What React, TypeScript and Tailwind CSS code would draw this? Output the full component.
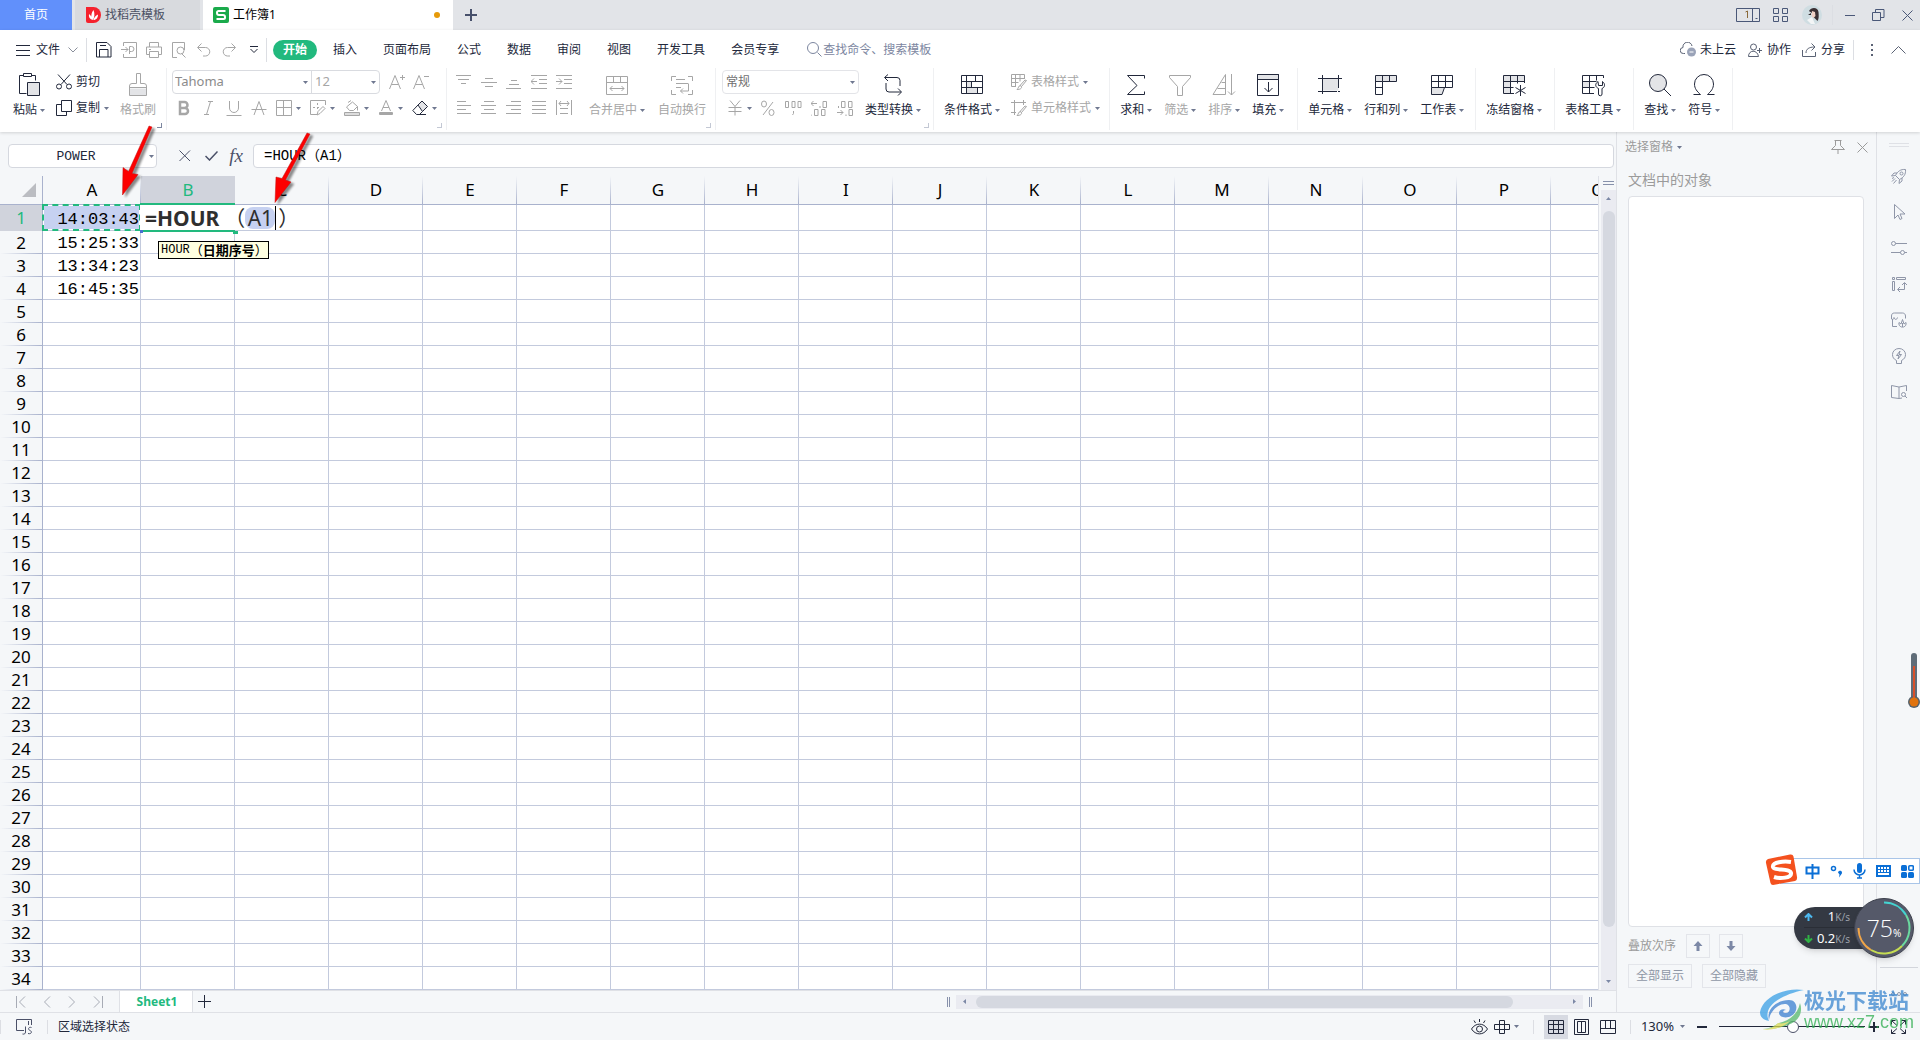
import type { ReactNode } from 'react'

type IconProps = { d?: string; w?: number; h?: number; className?: string; children?: ReactNode }

const Icon = ({ d, w = 16, h = 16, className = '', children }: IconProps) => (
  <svg width={w} height={h} viewBox={`0 0 ${w} ${h}`} fill="none" stroke="currentColor" className={`shrink-0 ${className}`} aria-hidden="true">
    {children}
    {d && <path d={d} />}
  </svg>
)

const Big = ({ d, children }: { d?: string; children?: ReactNode }) => <Icon w={24} h={24} d={d}>{children}</Icon>

const Caret = () => (
  <svg width="5" height="3" viewBox="0 0 5 3" className="shrink-0 text-[#6f7890]" aria-hidden="true">
    <path d="M0 0h5L2.500 3z" fill="currentColor" />
  </svg>
)

const Divider = ({ className = 'h-6' }: { className?: string }) => <span className={`w-px shrink-0 bg-[#dcdee3] ${className}`} />

const OFF = 'text-[#a6a6a6]'
const SHADE = '#e3e4e7'

/* ---------- title bar ---------- */

const TitleBar = () => (
  <header className="flex h-[30px] shrink-0 items-stretch bg-[#e2e4e8] text-xs">
    <button className="w-[72px] bg-[#6190fb] text-white">首页</button>
    <button className="ml-[3px] flex w-[125px] items-center gap-1 bg-[#d8dade] pl-[11px] text-[#4b5063]">
      <svg width="15" height="16" viewBox="0 0 15 16" aria-hidden="true">
        <path d="M0 0h7.500a7.500 8 0 0 1 0 16H2a2 2 0 0 1-2-2z" fill="#f5222d" />
        <path d="M7 13C4.500 11 5 6 7.500 3c1.500 4 1 7-.5 10zM6.500 13C3.500 12 2.500 10 3 7c2 1.500 3 3 3.500 6zM7.500 13c3 0 4.500-2.500 4.500-5.500-2.500 1-4 3-4.500 5.500z" fill="#fff" />
      </svg>
      找稻壳模板
    </button>
    <button className="ml-[3px] flex w-[250px] items-center gap-1 bg-white pl-[10px] text-black">
      <svg width="16" height="16" viewBox="0 0 16 16" aria-hidden="true">
        <rect width="16" height="16" rx="2" fill="#1aaa4b" />
        <path d="M12.500 4h-7a1.500 1.500 0 0 0-1.500 1.500V6a2 2 0 0 0 2 2h4a2 2 0 0 1 2 2v.5a1.500 1.500 0 0 1-1.500 1.500h-7" fill="none" stroke="#fff" strokeWidth="2" />
      </svg>
      工作簿1
      <span className="ml-auto mr-[13px] size-[6px] rounded-full bg-[#e69a0a]" />
    </button>
    <button aria-label="新建" className="flex w-9 items-center justify-center text-[#47506b]">
      <Icon w={12} h={12}><path d="M6 0v12M0 6h12" strokeWidth="2" /></Icon>
    </button>
    <div className="ml-auto flex items-center pr-[7px] text-[#4a5878]">
      <button aria-label="窗口" className="mr-3">
        <Icon w={25} h={14} d="M.5 .5h23v13h-23zM16.500 .5v13M19.500 10.500h2"><path d="M9.500 4l2-1v7" stroke="#8a6a3a" /></Icon>
      </button>
      <button aria-label="应用" className="mr-[14px]">
        <Icon w={15} h={15} d="M.5 .5h5v5h-5zM9.500 .5h5v5h-5zM.5 8.500h5v5h-5zM9.500 8.500h5v5h-5z" />
      </button>
      <button aria-label="账户">
        <svg width="20" height="20" viewBox="0 0 20 20" aria-hidden="true">
          <circle cx="10" cy="10" r="10" fill="#cfdde2" />
          <path d="M7 6c2-4 9-4 9.500 1 .3 4 .5 7-1 9l-4-4c1-3-2-4-4.500-6z" fill="#3a2f33" />
          <path d="M10 6l3 1 .5 4-2 2-2-2z" fill="#f0cfc4" />
          <path d="M5 15l5-3 3 7H9z" fill="#f3f5f6" />
          <path d="M6 10l3-2v2z" fill="#2a2226" />
        </svg>
      </button>
      <Divider className="ml-[10px] mr-3 h-5 bg-[#c9ccd2]" />
      <button aria-label="最小化" className="mr-[17px]"><Icon w={10} h={12} d="M0 6.500h10" /></button>
      <button aria-label="还原" className="mr-[17px]"><Icon w={13} h={12} d="M.5 3.500h8v8h-8zM3.500 3.500v-3h8.500v8h-3.500" /></button>
      <button aria-label="关闭"><Icon w={11} h={11} d="M.5 .5l10 10M10.500 .5l-10 10" /></button>
    </div>
  </header>
)

/* ---------- menu row ---------- */

const menus = ['插入', '页面布局', '公式', '数据', '审阅', '视图', '开发工具', '会员专享']

const quick = [
  { name: '输出为PDF', d: 'M2.500 4V.5h13v15h-13V12M0 7.500h7M4.500 5l2.500 2.500L4.500 10M8.500 12V4.500h2a2.500 2.500 0 0 1 0 5h-2' },
  { name: '打印', d: 'M3.500 5V.5h9V5M3.500 12.500h-3V5h15v7.500h-3M3.500 9.500h9v6h-9zM3 7.500h2' },
  { name: '打印预览', d: 'M6 15.500H1.500v-15h12V8M10.500 11.500l4 4M13 8.500a3.500 3.500 0 1 1-7 0 3.500 3.500 0 0 1 7 0z' },
  { name: '撤销', d: 'M5.500 1.500l-4 4 4 4M2 5.500h7.500a4 4 0 0 1 0 8.500H7' },
  { name: '恢复', d: 'M10.500 1.500l4 4-4 4M14 5.500H6.500a4 4 0 0 0 0 8.500H9' },
]

const MenuRow = () => (
  <nav className="flex h-[38px] items-center pl-4 pt-px text-xs text-[#22283b]">
    <button className="flex items-center">
      <Icon w={14} h={12} d="M0 1.500h14M0 6.500h14M0 11.500h14" />
      <span className="ml-[6px]">文件</span>
      <Icon w={10} h={6} d="M.5 .5L5 5 9.500 .5" className="ml-2 text-[#8a8f9b]" />
    </button>
    <Divider className="ml-2 mr-[9px] h-6" />
    <div className="flex items-center gap-[9px]">
      <button aria-label="保存"><Icon d="M.5 .5h10.500l4 4v10.500h-14.500zM3.500 15V7.500h8.500V15M4 3.500h6" /></button>
      {quick.map(q => <button key={q.name} aria-label={q.name} className={OFF}><Icon d={q.d} /></button>)}
      <button aria-label="自定义" className="ml-1"><Icon w={9} h={7} d="M0 .5h8M.5 3l3.500 3.500L7.500 3" /></button>
    </div>
    <Divider className="ml-[7px] mr-[6px] h-6" />
    <button className="h-5 w-11 rounded-full bg-[#22b97e] font-bold text-white">开始</button>
    <div className="ml-4 flex gap-[26px]">
      {menus.map(m => <button key={m}>{m}</button>)}
    </div>
    <label className="ml-7 flex items-center gap-px text-[#7c869f]">
      <Icon w={15} h={15} d="M10.500 10.500l4 4M11.500 6a5.500 5.500 0 1 1-11 0 5.500 5.500 0 0 1 11 0z" />
      <input placeholder="查找命令、搜索模板" className="w-32 outline-none placeholder:text-[#7c869f]" />
    </label>
    <div className="ml-auto flex items-center pr-[14px]">
      <button className="flex items-center gap-1">
        <Icon w={16} h={15} className="text-[#5a6274]">
          <path d="M5 11.500H3.500a3 3 0 0 1-.5-6 4.500 4.500 0 0 1 9-1.500" />
          <circle cx="11.500" cy="10" r="4.500" fill="#9aa3b8" stroke="none" />
          <path d="M9.500 10h4" stroke="#fff" />
        </Icon>
        未上云
      </button>
      <button className="ml-3 flex items-center gap-[5px]">
        <Icon w={14} h={14} className="text-[#5a6274]" d="M8.500 4a3 3 0 1 1-6 0 3 3 0 0 1 6 0zM.5 13.500c0-7 9-7 10 0zM9 7.500h5M11.500 5v5" />
        协作
      </button>
      <button className="ml-[11px] flex items-center gap-[5px]">
        <Icon w={14} h={14} className="text-[#5a6274]" d="M.5 7v6.500h13V9M4 10c0-4 3-6 8.500-6M9.500 .5L13 4 9.500 7.500" />
        分享
      </button>
      <Divider className="ml-2 mr-[17px] h-5" />
      <button aria-label="更多"><svg width="2" height="12" aria-hidden="true"><path d="M0 0h2v2H0zM0 5h2v2H0zM0 10h2v2H0z" fill="#5a6274" /></svg></button>
      <button aria-label="收起" className="ml-[18px]"><Icon w={15} h={8} d="M.5 7.500l7-7 7 7" className="text-[#5a6274]" /></button>
    </div>
  </nav>
)

/* ---------- ribbon ---------- */

const Group = ({ children, className = '', mark = '' }: { children: ReactNode; className?: string; mark?: string }) => (
  <div className={`relative flex h-[62px] shrink-0 items-start border-r border-[#eff0f2] ${className}`}>
    {children}
    {mark && <span className={`absolute bottom-[2px] right-1 size-[5px] border-b border-r ${mark}`} />}
  </div>
)

const BigButton = ({ label, icon, off = false, caret = true }: { label: string; icon: ReactNode; off?: boolean; caret?: boolean }) => (
  <button className={`flex shrink-0 flex-col items-center pt-[5px] ${off ? 'text-[#a6a6a6]' : 'text-[#22283b]'}`}>
    {icon}
    <span className="mt-1 flex items-center gap-[3px] whitespace-nowrap leading-[18px]">{label}{caret && <Caret />}</span>
  </button>
)

const Rows = ({ top, bottom, className = '' }: { top: ReactNode; bottom: ReactNode; className?: string }) => (
  <div className={`flex shrink-0 flex-col gap-1 pt-[2px] ${className}`}>
    <div className="flex h-6 items-center">{top}</div>
    <div className="flex h-5 items-center">{bottom}</div>
  </div>
)

const alignTop = [
  { name: '顶端对齐', d: 'M0 1.500h15M2 5.500h11M5 9.500h5' },
  { name: '垂直居中', d: 'M4 4.500h8M0 8.500h16M4 12.500h8' },
  { name: '底端对齐', d: 'M5 6.500h6M3 10.500h10M0 14.500h15' },
  { name: '减少缩进', d: 'M0 1.500h16M8 5.500h8M8 9.500h8M0 14.500h16M0 7.500h6M3 4.500l-3 3 3 3' },
  { name: '增加缩进', d: 'M0 1.500h16M8 5.500h8M8 9.500h8M0 14.500h16M0 7.500h6M3 4.500l3 3-3 3' },
]

const alignBottom = [
  { name: '左对齐', d: 'M1 1.500h9M1 5.500h14M1 9.500h9M1 13.500h14' },
  { name: '居中', d: 'M3 1.500h10M0 5.500h15M3 9.500h10M0 13.500h15' },
  { name: '右对齐', d: 'M5 1.500h10M0 5.500h15M5 9.500h10M0 13.500h15' },
  { name: '两端对齐', d: 'M1 1.500h14M1 5.500h14M1 9.500h14M1 13.500h14' },
  { name: '分散对齐', d: 'M.5 0v15M15.500 0v15M3 3.500h10M5 1L3 3.500 5 6M11 1l2 2.500L11 6M4 8.500h8M4 13.500h8' },
]

const GRID = 'M1.500 2.500h21v18h-21z'

const Ribbon = () => (
  <div className="flex h-16 text-xs">
    <Group className="gap-[11px] pl-[13px] pr-[10px]" mark="border-[#7c869f]">
      <BigButton label="粘贴" icon={<Big d="M9.500 20.500H2.500v-18h4M14.500 2.500h4v5M6.500 .5h8v3h-8z"><path d="M10.500 9.500h12v13h-12z" fill={SHADE} /></Big>} />
      <Rows
        className="text-[#22283b]"
        top={<button className="flex items-center gap-1"><Icon d="M2 .5l9 10M14 .5l-9 10M5.500 12.500a2.500 2.500 0 1 1-5 0 2.500 2.500 0 0 1 5 0zM15.500 12.500a2.500 2.500 0 1 1-5 0 2.500 2.500 0 0 1 5 0z" />剪切</button>}
        bottom={<button className="flex items-center gap-1"><Icon d="M5.500 .5h10v11h-10zM5.500 4.500h-5v11h10v-4" />复制<Caret /></button>}
      />
      <BigButton off caret={false} label="格式刷" icon={<Big><path d="M3.500 15.500h17v7.500h-17z" fill={SHADE} stroke="none" /><path d="M10.500 .5h4v10h3.500a2.500 2.500 0 0 1 2.500 2.500v9.500h-17V13A2.500 2.500 0 0 1 6 10.500h4.500zM3.500 14.500h17" /></Big>} />
    </Group>

    <Group className="pl-[5px] pr-[9px]" mark="border-[#c3c8d4]">
      <Rows
        top={
          <>
            <div className="flex h-6 w-[208px] items-center rounded-sm border border-[#d9dbe0] pr-[3px]">
              <select aria-label="字体" className="ml-[2px] flex-1 appearance-none text-[13px] text-[#8b8b8b] outline-none"><option>Tahoma</option></select>
              <Caret />
              <span className="ml-[3px] h-full w-px bg-[#d9dbe0]" />
              <select aria-label="字号" className="ml-[3px] w-[56px] appearance-none text-[13px] text-[#a6a6a6] outline-none"><option>12</option></select>
              <Caret />
            </div>
            <button aria-label="增大字号" className={`ml-[9px] ${OFF}`}><Icon d="M.5 15L6 1.500 11.500 15M2.500 10.500h7M11 3.500h5M13.500 1v5" /></button>
            <button aria-label="减小字号" className={`ml-2 ${OFF}`}><Icon d="M.5 15L6 1.500 11.500 15M2.500 10.500h7M11 2.500h5" /></button>
          </>
        }
        bottom={
          <div className={`ml-1 flex items-center gap-[9px] ${OFF}`}>
            <button aria-label="加粗"><Icon><path d="M4 2h4.500a3 3 0 0 1 0 6H4zM4 8h5a3 3 0 0 1 0 6H4z" strokeWidth="2.500" /></Icon></button>
            <button aria-label="倾斜"><Icon d="M7 1.500h5M3 14.500h5M9.500 1.500l-4 13" /></button>
            <button aria-label="下划线"><Icon d="M3.500 1v7a4.500 4.500 0 0 0 9 0V1M.5 15.500h15" /></button>
            <button aria-label="删除线"><Icon d="M3 15L8 1.500 13 15M.5 9.500h15" /></button>
            <button aria-label="边框" className="flex items-center gap-1"><Icon d="M.5 .5h15v15H.5zM7.500 .5v15M.5 7.500h15" /><Caret /></button>
            <button aria-label="绘制边框" className="flex items-center gap-1"><Icon d="M7 14.500H.5V.5h15V5M3 7.500h2M7 7.500h2M7.500 3v2M7.500 7v2M7 15l1-3.500 5-5 2 2-5 5z" /><Caret /></button>
            <button aria-label="填充颜色" className="flex items-center gap-1"><Icon><path d="M.5 12.500h15v3H.5z" fill="#dcdcdc" /><path d="M2.500 7l6-5 5 4.500-4 4h-4zM4 2.500l3-2M13.500 6.500v4" /></Icon><Caret /></button>
            <button aria-label="字体颜色" className="flex items-center gap-1"><Icon><path d="M3.500 11L8 .5l4.500 10.500M5 7.500h6" /><rect x="1" y="12" width="14" height="3" rx="1" fill="currentColor" stroke="none" /></Icon><Caret /></button>
            <button aria-label="清除" className="flex items-center gap-1 text-[#22283b]"><Icon><path d="M6 5l4-4 5.500 5.500-5 5z" fill={SHADE} /><path d="M10.500 11.500L7.500 14.500h-3L.8 10.500 6 5M5 14.500h9" /></Icon><Caret /></button>
          </div>
        }
      />
    </Group>

    <Group className="pl-[9px] pr-[9px]" mark="border-[#c3c8d4]">
      <Rows
        className="mr-[17px]"
        top={<div className={`flex gap-[9px] ${OFF}`}>{alignTop.map(a => <button key={a.name} aria-label={a.name}><Icon d={a.d} /></button>)}</div>}
        bottom={<div className={`flex gap-[9px] ${OFF}`}>{alignBottom.map(a => <button key={a.name} aria-label={a.name}><Icon d={a.d} /></button>)}</div>}
      />
      <BigButton off label="合并居中" icon={<Big d="M1.500 3.500h21v18h-21zM1.500 9.500h21M8.500 3.500v6M15.500 3.500v6M5 15.500h14M7.500 13L5 15.500 7.500 18M16.500 13l2.500 2.500-2.500 2.500" />} />
      <span className="w-[13px]" />
      <BigButton off caret={false} label="自动换行" icon={<Big d="M1.500 8V3.500H6M18 3.500h4.500V8M1.500 17v4.500H6M18 21.500h4.500V17M6 6.500h9M6 10.500h12M6 14.500h5M18.500 10.500v7.500h-8M13 15.500L10.500 18l2.500 2.500" />} />
    </Group>

    <Group className="gap-[6px] pl-[6px] pr-3" mark="border-[#c3c8d4]">
      <Rows
        className="w-[137px]"
        top={
          <div className="flex h-6 flex-1 items-center rounded-sm border border-[#e3e4e8] pr-[3px]">
            <select aria-label="数字格式" className="ml-[3px] flex-1 appearance-none text-[#6f6f6f] outline-none"><option>常规</option></select>
            <Caret />
          </div>
        }
        bottom={
          <div className={`ml-[6px] flex flex-1 items-center justify-between pr-[5px] ${OFF}`}>
            <button aria-label="货币" className="flex items-center gap-[5px]"><Icon w={14} d="M2 .5l5 6 5-6M7 6.500v9M.5 7.500h13M.5 11.500h13" /><Caret /></button>
            <button aria-label="百分比"><Icon w={14} d="M12 2L2 15M5.500 4a2.500 3 0 1 1-5 0 2.500 3 0 0 1 5 0zM13 12.500a2.500 3 0 1 1-5 0 2.500 3 0 0 1 5 0z" /></button>
            <button aria-label="千位分隔"><Icon w={17} d="M.5 1.500h3v6h-3zM7 1.500h3v6H7zM13 1.500h3v6h-3zM8.500 11v2.500L7.500 15" /></button>
            <button aria-label="增加小数位"><Icon w={17} d="M0 3.500h6M2.500 1L0 3.500 2.500 6M9 6v2M12 1.500h3.500v6H12zM0 14.500v1.500M3.500 9.500h3.500v6H3.500zM10.500 9.500H14v6h-3.500z" /></button>
            <button aria-label="减少小数位"><Icon w={17} d="M1.500 6v2M4.500 1.500H8v6H4.500zM11.500 1.500H15v6h-3.500zM0 12.500h6M3.500 10L6 12.500 3.500 15M9 14.500V16M12 9.500h3.500v6H12z" /></button>
          </div>
        }
      />
      <BigButton label="类型转换" icon={<Big d="M7 1.500L3.500 4.500 7 8M4 4.500h12a3 3 0 0 1 3 3V13M5 10v6a3 3 0 0 0 3 3h12M17 15.500l3.500 3.500-3.500 3.500" />} />
    </Group>

    <Group className="gap-[11px] pl-[10px] pr-[9px]">
      <BigButton label="条件格式" icon={<Big><path d="M7 8.500h4v6H7zM7 14.500h10v6H7z" fill={SHADE} stroke="none" /><path d={`${GRID}M1.500 8.500h21M1.500 14.500h21M6.500 2.500v18M15.500 2.500v6M11.500 8.500v6M17.500 14.500v6`} /></Big>} />
      <Rows
        className={OFF}
        top={<button className="flex items-center gap-1"><Icon d="M5 12.500H.5V.5h13V5M.5 4.500h13M.5 8.500h7M4.500 .5v12M9 .5v7M15.500 6.500l-5 6-1.500-1 5-5.500zM9.500 11.500c-2 0-2 3-3.500 4 3 0 5-1 4.500-3" />表格样式<Caret /></button>}
        bottom={<button className="flex items-center gap-1"><Icon d="M0 2.500h15M3.500 0v15M0 12.500h5M12.500 0v5M15.500 6.500l-5 6-1.500-1 5-5.500zM9.500 11.500c-2 0-2 3-3.500 4 3 0 5-1 4.500-3" />单元格样式<Caret /></button>}
      />
    </Group>

    <Group className="gap-3 pl-[10px] pr-[13px]">
      <BigButton label="求和" icon={<Big d="M20.500 5.500v-3h-17l9.500 10-9.500 9h17v-3" />} />
      <BigButton off label="筛选" icon={<Big d="M1.500 2.500h21v2l-8 9v9h-5v-9l-8-9z" />} />
      <BigButton off label="排序" icon={<Big d="M1 21.500h12.500v-20zM5.500 15.500h8M9.500 9.500h4M19.500 1v21M16 18.500l3.500 3.500 3.500-3.500" />} />
      <BigButton label="填充" icon={<Big><path d="M1.500 1.500h21v5h-21z" fill={SHADE} /><path d="M1.500 1.500h21v21h-21zM12.500 9v10M8.500 15l4 4 4-4" /></Big>} />
    </Group>

    <Group className="gap-3 pl-[10px] pr-[11px]">
      <BigButton label="单元格" icon={<Big><path d="M4.500 5.500h16v12h-16z" fill={SHADE} stroke="none" /><path d="M0 5.500h24M4.500 2v19M20.500 2v13M0 18.500h19M20 18.500h2" /></Big>} />
      <BigButton label="行和列" icon={<Big><path d="M1.500 2.500h21v6h-21z" fill={SHADE} stroke="none" /><path d="M1.500 2.500h21v6h-14v13h-7zM1.500 8.500h7M1.500 14.500h7M8.500 2.500v6M15.500 2.500v6" /></Big>} />
      <BigButton label="工作表" icon={<Big><path d="M1.500 14.500h13l-2 7h-11z" fill={SHADE} stroke="none" /><path d="M1.500 2.500h21v12h-21zM1.500 8.500h21M8.500 2.500v12M15.500 2.500v12M1.500 14.500v7h10.500l2.500-7" /></Big>} />
    </Group>

    <Group className="pl-[10px] pr-3">
      <BigButton label="冻结窗格" icon={<Big><path d="M1.500 2.500h21v6h-14v12h-7z" fill={SHADE} stroke="none" /><path d="M12 20.500H1.500v-18h21V10M1.500 8.500h21M1.500 14.500h10M8.500 2.500v18M15.500 2.500v8M18.500 12v11M13.500 14.500l10 6M23.500 14.500l-10 6" /></Big>} />
    </Group>
    <Group className="pl-[10px] pr-3">
      <BigButton label="表格工具" icon={<Big><path d="M1.500 8.500h7v6h-7z" fill={SHADE} stroke="none" /><path d="M13 20.500H1.500v-18h21V5M1.500 8.500h14M1.500 14.500h12M8.500 2.500v18M15.500 2.500v5M17 8.500c-4 3-2 6 .5 7v5.500a1.500 1.500 0 0 0 3.500 0v-5.500c2.500-1 4-4 .5-7v4h-4z" /></Big>} />
    </Group>
    <Group className="gap-3 pl-[10px] pr-3">
      <BigButton label="查找" icon={<Big><circle cx="10" cy="10" r="8.500" fill={SHADE} /><path d="M16 16l7 7" /></Big>} />
      <BigButton label="符号" icon={<Big d="M1.500 21.500h7c-3.500-3-6-6-6-10.500a9.500 9.500 0 0 1 19 0c0 4.500-2.500 7.500-6 10.500h7" />} />
    </Group>
  </div>
)

/* ---------- formula bar ---------- */

const FormulaBar = () => (
  <div className="flex h-6 shrink-0 items-center pl-2 pr-[2px] text-[#4a5068]">
    <div className="flex h-6 w-[149px] items-center rounded-sm border border-[#d5d8df] bg-white pr-[2px]">
      <input aria-label="名称框" defaultValue="POWER" className="min-w-0 flex-1 pr-[6px] pt-[2px] text-center font-['Liberation_Mono',monospace] text-[13px] text-[#22283b] outline-none" />
      <Caret />
    </div>
    <button aria-label="取消" className="ml-[22px]"><Icon w={12} h={12} d="M.5 .5l10.500 10.500M11 .5L.5 11" /></button>
    <button aria-label="确认" className="ml-[14px]"><Icon w={13} h={10}><path d="M.5 5l4 4L12.500 .5" strokeWidth="1.500" /></Icon></button>
    <button aria-label="插入函数" className="ml-[9px] w-[18px] font-['Liberation_Serif',serif] text-[19px] italic leading-5">fx</button>
    <input
      aria-label="编辑栏"
      defaultValue="=HOUR（A1）"
      className="ml-2 h-6 min-w-0 flex-1 rounded-sm border border-[#d5d8df] bg-white pb-1 pl-[10px] font-['Liberation_Mono','Noto_Sans_CJK_SC',monospace] text-sm leading-5 text-black outline-none"
    />
  </div>
)

/* ---------- sheet ---------- */

const columns = 'ABCDEFGHIJKLMNOPQ'.split('')
const times = ['14:03:43', '15:25:33', '13:34:23', '16:45:35']
const rows = Array.from({ length: 34 }, (_, i) => i + 1)

const Editing = () => (
  <div className="absolute -left-px -top-[2px] z-10 h-[29px] w-[95px] border-y-2 border-[#22b97e] bg-white">
    <div className="flex h-[25px] w-40 items-center whitespace-nowrap bg-white pl-[5px] text-[21px] leading-6 text-[#2f2f2f]">
      <b>=HOUR</b>
      <span className="flex w-[26px] shrink-0 justify-end">（</span>
      <span className="flex h-[22px] w-[30px] shrink-0 items-center justify-center rounded-lg bg-[#c6d1f1]">A1</span>
      <span className="h-6 w-px shrink-0 bg-black" />
      <span className="pl-[2px]">）</span>
    </div>
    <span className="absolute -bottom-[3px] left-0 h-[3px] w-[3px] bg-[#4a6fd0]" />
    <span className="absolute -bottom-[4px] -right-[3px] h-[3px] w-[5px] bg-[#22b97e]" />
    <div className="absolute left-[18px] top-9 flex h-[18px] items-center whitespace-nowrap border border-black bg-[#ffffe1] pl-[2px] text-[13px] leading-4 text-black">
      <span className="font-['Liberation_Mono',monospace] text-xs">HOUR</span>（<b>日期序号</b>）
    </div>
  </div>
)

const Sheet = () => (
  <div className="min-w-0 flex-1 overflow-hidden border-r border-[#dfe1e8]">
    <table className="w-[1645px] table-fixed border-separate border-spacing-0 text-[17px] text-black">
      <colgroup>
        <col className="w-[43px]" />
        <col className="w-[98px]" />
        {columns.slice(1).map(c => <col key={c} className="w-[94px]" />)}
      </colgroup>
      <thead>
        <tr className="h-[29px]">
          <th className="border-b border-r border-[#a9b2cd] p-0">
            <svg width="14" height="14" className="ml-[22px]" aria-hidden="true"><path d="M14 0v14H0z" fill="#bbbdc2" /></svg>
          </th>
          {columns.map(c => (
            <th
              key={c}
              className={`border-b border-[#a9b2cd] p-0 font-normal leading-6 ${c === 'B' ? 'bg-[#d0d3dc] text-[#22b97e]' : 'bg-[linear-gradient(to_bottom,transparent,#a9b2cd)] bg-[length:1px_100%] bg-right bg-no-repeat'}`}
            >
              {c}
            </th>
          ))}
        </tr>
      </thead>
      <tbody>
        {rows.map(r => (
          <tr key={r} className={r === 1 ? 'h-[26px]' : 'h-[23px]'}>
            <th
              scope="row"
              className={`border-r border-[#a9b2cd] p-0 font-normal leading-[22px] ${r === 1 ? 'bg-[#d0d3dc] text-[#22b97e]' : 'bg-[linear-gradient(to_right,transparent,#a9b2cd)] bg-[length:100%_1px] bg-bottom bg-no-repeat'}`}
            >
              {r}
            </th>
            {columns.map(c => (
              <td key={c} className="relative border-b border-r border-[#c3cadd] bg-white p-0 pt-1 text-right font-['Liberation_Mono',monospace] text-[17px] leading-[18px]">
                {c === 'A' && r === 1 && (
                  <div className="absolute -inset-px flex items-center justify-end border-2 border-dashed border-[#22b97e] bg-[#c6d1f1] bg-clip-padding pt-1">
                    {times[0]}
                  </div>
                )}
                {c === 'A' && r > 1 && times[r - 1] && <span className="mr-px">{times[r - 1]}</span>}
                {c === 'B' && r === 1 && <div className="text-left font-['Noto_Sans','Noto_Sans_CJK_SC',sans-serif]"><Editing /></div>}
              </td>
            ))}
          </tr>
        ))}
      </tbody>
    </table>
  </div>
)

const VScroll = () => (
  <div className="ml-[2px] flex w-[15px] shrink-0 flex-col">
    <div className="mx-[2px] mt-[5px] h-1 border-y border-[#8791ab]" />
    <div className="mt-[5px] flex min-h-0 flex-1 flex-col items-center bg-[#eaebf1] pb-[7px] pt-[7px]">
      <Icon w={5} h={3}><path d="M0 3h5L2.500 0z" fill="#7c88a6" stroke="none" /></Icon>
      <span className="mt-[11px] w-3 flex-1 rounded-full bg-[#d5d8e0]" />
      <Icon w={5} h={3} className="mt-[53px]"><path d="M0 0h5L2.500 3z" fill="#7c88a6" stroke="none" /></Icon>
    </div>
  </div>
)

const SheetTabs = () => (
  <div className="flex h-[23px] shrink-0 items-center border-y border-[#dfe1e6] text-[#a7abb5]">
    <div className="flex w-[119px] gap-[17px] pl-4">
      <button aria-label="第一张"><Icon w={10} h={12} d="M.5 0v12M9 .5L3.500 6 9 11.500" /></button>
      <button aria-label="上一张"><Icon w={8} h={12} d="M7 .5L1.500 6 7 11.500" /></button>
      <button aria-label="下一张"><Icon w={8} h={12} d="M1 .5L6.500 6 1 11.500" /></button>
      <button aria-label="最后一张"><Icon w={10} h={12} d="M9.500 0v12M1 .5L6.500 6 1 11.500" /></button>
    </div>
    <button className="h-[21px] w-[74px] border-x border-[#dfe1e6] bg-white pl-[2px] text-[12px] font-bold leading-5 text-[#22b97e]">Sheet1</button>
    <button aria-label="新建工作表" className="ml-[5px] text-[#22283b]"><Icon w={13} h={13} d="M6.500 0v13M0 6.500h13" /></button>
    <div className="ml-auto flex w-[42%] items-center pl-[10px] pr-6">
      <span className="h-[10px] w-[3px] border-x border-[#8791ab]" />
      <div className="ml-[6px] flex h-[14px] flex-1 items-center bg-[#eaebf1] px-[7px]">
        <Icon w={3} h={5}><path d="M3 0v5L0 2.500z" fill="#7c88a6" stroke="none" /></Icon>
        <span className="ml-[10px] mr-[60px] h-3 flex-1 rounded-full bg-[#d5d8e0]" />
        <Icon w={3} h={5}><path d="M0 0v5l3-2.500z" fill="#7c88a6" stroke="none" /></Icon>
      </div>
      <span className="ml-[6px] h-[10px] w-[3px] border-x border-[#8791ab]" />
    </div>
  </div>
)

/* ---------- selection pane and side tools ---------- */

const Pane = () => (
  <aside className="flex w-[261px] shrink-0 flex-col border-x border-b border-[#dfe1e6] pb-6 pl-[11px] pr-3 text-xs text-[#9b9b9b]">
    <div className="-ml-[3px] -mr-1 flex h-[30px] items-center">
      <button className="flex items-center gap-1">选择窗格<Caret /></button>
      <button aria-label="固定" className="ml-auto"><Icon w={14} h={14} d="M3.500 .5h7M4.500 .5v5l-4 4h13l-4-4v-5M7 9.500V14" /></button>
      <button aria-label="关闭窗格" className="ml-[12px]"><Icon w={11} h={11} d="M.5 .5l10 10M10.500 .5l-10 10" /></button>
    </div>
    <h2 className="pb-[5px] pt-[7px] text-sm leading-[22px]">文档中的对象</h2>
    <div className="flex-1 rounded-sm border border-[#dfe1e6] bg-white" />
    <div className="mt-[7px] flex items-center">
      叠放次序
      <button aria-label="上移" className="ml-[10px] flex size-6 items-center justify-center border border-[#e3e5ea]"><Icon w={10} h={10}><path d="M5 0l4.500 5H6.500v5h-3V5H.5z" fill="#7c88a6" stroke="none" /></Icon></button>
      <button aria-label="下移" className="ml-[9px] flex size-6 items-center justify-center border border-[#e3e5ea]"><Icon w={10} h={10}><path d="M5 10l4.500-5H6.500V0h-3v5H.5z" fill="#7c88a6" stroke="none" /></Icon></button>
    </div>
    <div className="mt-[6px] flex gap-[10px] text-[#8f96a5]">
      <button className="h-6 w-16 border border-[#e3e5ea]">全部显示</button>
      <button className="h-6 w-16 border border-[#e3e5ea]">全部隐藏</button>
    </div>
  </aside>
)

const tools = [
  { name: '助手', d: 'M14.500 1.500c-5-.5-8 2-10 6l4 4c4-2 6.500-5 6-10zM12 5.500a1.500 1.500 0 1 1-3 0 1.500 1.500 0 0 1 3 0zM6 5H3L.5 8l4-.5M11 10v3l-3 2.500.5-4M4 10.500L1 13.500M5.500 12L2.500 15.500M3 9.500l-2 1' },
  { name: '选择', d: 'M3.500 .5v14l3.500-3.500 2 4.500 2-1-2-4.500h5z' },
  { name: '设置', d: 'M4.500 3.500a2 2 0 1 1-4 0 2 2 0 0 1 4 0zM4.500 3.500H16M13.500 12.500a2 2 0 1 1-4 0 2 2 0 0 1 4 0zM0 12.500h9.500M13.500 12.500H16' },
  { name: '结构', d: 'M1.500 1.500h2v2h-2zM5.500 1.500h9v2h-9zM1.500 5.500h2v9h-2zM13.500 7v6.500H7M11 9l2.500-2.500L16 9M9 11l-2.500 2.500L9 16' },
  { name: '稻壳', d: 'M6 14.500H1.500V7M.5 7V4c0-2 1-3 3-3h8c1.500 0 3 1 3 3v2.500M.5 7c1.500 1 2.500 0 2.500-1.500C3.500 8 6 8 6.500 5.500M10.500 15c-2-.5-3-2.500-2.500-4.500l2 1.500 1.500-4.500L13 12l2-1.500c.5 2-.5 4-2.500 4.500zM11.500 11v4' },
  { name: '灵感', d: 'M5.500 15.500v-3C2.500 11 1.500 9 1.500 6.500a6.500 6 0 0 1 13 0c0 2.500-1 4.500-4 6v3zM9 3L5.500 7.500H8L7 11l3.500-4.500H8z' },
  { name: '查阅', d: 'M8 3v11M8 3L.5 1.500v12L8 14.500M8 3l7.500-1.500V7M8 14.500l3-.5M14.500 10.500a2 2 0 1 1-4 0 2 2 0 0 1 4 0zM14 12l2 2' },
]

const SideTools = () => (
  <aside className="flex w-[43px] shrink-0 flex-col items-center border-b border-[#dfe1e6] pt-[11px] text-[#8f96a8]">
    <span className="h-1 w-5 border-y border-[#dfe1e6]" />
    <div className="mt-[21px] flex flex-col gap-5">
      {tools.map(t => <button key={t.name} aria-label={t.name}><Icon d={t.d} /></button>)}
    </div>
    <span className="mb-6 mt-auto h-px w-[38px] bg-[#d3d6dc]" />
    <button aria-label="更多工具" className="mb-4"><Icon w={16} h={4} d="M3.500 2a1.500 1.500 0 1 1-3 0 1.500 1.500 0 0 1 3 0zM9.500 2a1.500 1.500 0 1 1-3 0 1.500 1.500 0 0 1 3 0zM15.500 2a1.500 1.500 0 1 1-3 0 1.500 1.500 0 0 1 3 0z" /></button>
  </aside>
)

/* ---------- status bar ---------- */

const StatusBar = () => (
  <footer className="flex h-[27px] shrink-0 items-center text-xs text-[#22283b]">
    <Divider className="h-[14px]" />
    <Icon w={17} h={16} className="ml-[15px] text-[#4a5068]" d="M8 11.500H.5V.5h12M12.500 2v4M15.500 .5v5.500M12 .5h3.500M9.500 7.500V13c0 1.500-1 2.500-3 2M15.500 8.500c-3-1-4 2-1.500 3s1.500 4-2 3" />
    <Divider className="ml-[14px] h-[14px]" />
    <span className="ml-[10px]">区域选择状态</span>
    <div className="ml-auto flex items-center pr-[14px]">
      <button aria-label="护眼模式"><Icon w={17} h={16} d="M.5 10c4-6.500 12-6.500 16 0-4 6.500-12 6.500-16 0zM11.500 10a3 3 0 1 1-6 0 3 3 0 0 1 6 0zM8.500 0v3M3 1.500l1.500 2.500M14 1.500L12.500 4" /></button>
      <button aria-label="阅读模式" className="ml-[6px] flex items-center gap-1"><Icon w={16} h={14} d="M5.500 .5h5v13h-5zM.5 4.500h15v5H.5z" /><Caret /></button>
      <Divider className="ml-[14px] mr-[10px] h-[14px]" />
      <button aria-label="普通视图" className="flex size-6 items-center justify-center bg-[#d7dae2]"><Icon w={16} h={14} d="M.5 .5h15v13H.5zM.5 4.500h15M.5 9.500h15M5.500 .5v13M10.500 .5v13" /></button>
      <button aria-label="分页预览" className="ml-[6px]"><Icon w={15} h={16} d="M.5 .5h14v15H.5zM3.500 2.500h8v11h-8zM7.500 2.500v11" /></button>
      <button aria-label="页面布局" className="ml-[11px]"><Icon w={16} h={14} d="M.5 .5h15v13H.5zM5.500 .5v8M10.500 .5v8M.5 8.500h15" /></button>
      <Divider className="ml-[14px] mr-[10px] h-[14px]" />
      <button className="flex items-center gap-[6px] text-[13px]">130%<Caret /></button>
      <button aria-label="缩小" className="ml-3"><Icon w={10} h={4}><path d="M0 2h10" strokeWidth="2" /></Icon></button>
      <input
        type="range"
        aria-label="缩放"
        defaultValue="51"
        className="ml-3 h-px w-[146px] appearance-none bg-[#22283b] [&::-webkit-slider-thumb]:size-3 [&::-webkit-slider-thumb]:appearance-none [&::-webkit-slider-thumb]:rounded-full [&::-webkit-slider-thumb]:border [&::-webkit-slider-thumb]:border-[#4a5068] [&::-webkit-slider-thumb]:bg-white"
      />
      <button aria-label="放大" className="ml-1"><Icon w={10} h={10}><path d="M5 0v10M0 5h10" strokeWidth="2" /></Icon></button>
      <button aria-label="全屏" className="ml-3"><Icon w={15} h={14} d="M.5 4.500v-4h4M10.500 .5h4v4M14.500 9.500v4h-4M4.500 13.500h-4v-4M.5 .5L6 5.500M14.500 .5L9 5.500M14.500 13.500L9 8.500M.5 13.500L6 8.500" /></button>
    </div>
  </footer>
)

/* ---------- things floating over the window ---------- */

const RedArrows = () => (
  <svg width="240" height="90" viewBox="0 0 240 90" className="pointer-events-none absolute left-[110px] top-[120px] z-20 drop-shadow-[3px_2px_1px_rgba(0,0,0,0.45)]" aria-hidden="true">
    <path d="M39 6l3 1-20 46.500 6 1L12.500 75 13 47.500l5.500 4z" fill="#fd0000" stroke="#c01010" strokeWidth="0.500" />
    <path d="M197 13l3 1-24.500 46 5.500 2-16 20.500L166 57l6 1.500z" fill="#fd0000" stroke="#c01010" strokeWidth="0.500" />
  </svg>
)

const ImeBar = () => (
  <div className="absolute bottom-[156px] right-0 z-20 flex h-[26px] w-[140px] items-center justify-end gap-[10px] border border-[#a9c5e8] bg-white pr-[5px] text-[#0a6fd6]">
    <svg width="34" height="32" viewBox="0 0 34 32" className="absolute -left-4 -top-[5px]" aria-hidden="true">
      <path d="M3 5L25 .5q3-.5 3.500 2L32 23q.5 3-2 4L8 31q-2 0-2.500-2L1 9q-.5-3 2-4z" fill="#f4511e" />
      <path d="M26 8c-7-1-19 0-18 5 1 4 17 1 18 6s-11 6-17 4" fill="none" stroke="#fff" strokeWidth="4" />
    </svg>
    <button aria-label="中文"><Icon w={15} h={15}><path d="M1.500 3.500h12v6h-12zM7.500 0v15" strokeWidth="2" /></Icon></button>
    <button aria-label="标点"><Icon w={13} h={13}><circle cx="3.500" cy="3.500" r="2" strokeWidth="1.500" /><path d="M8 7.500a2 2 0 1 1 3.500 1.500L9 12.500l.5-3z" fill="currentColor" stroke="none" /></Icon></button>
    <button aria-label="语音"><Icon w={13} h={16}><rect x="4" width="5" height="10" rx="2.500" fill="currentColor" stroke="none" /><path d="M1 6.500a5.500 5.500 0 0 0 11 0M6.500 12v3M4 15h5" strokeWidth="1.500" /></Icon></button>
    <button aria-label="键盘"><Icon w={15} h={12}><path d="M1 1h13v10H1z" strokeWidth="2" /><path d="M1 4.500h13M1 7.500h13M4.500 2v6M7.500 2v6M10.500 2v6" /></Icon></button>
    <button aria-label="工具箱"><Icon w={13} h={13}><rect width="6" height="6" rx="1.500" fill="currentColor" stroke="none" /><rect x="7.800" y=".8" width="4.500" height="4.500" rx="1" strokeWidth="1.600" /><rect y="7" width="6" height="6" rx="1.500" fill="currentColor" stroke="none" /><rect x="7" y="7" width="6" height="6" rx="1.500" fill="currentColor" stroke="none" /></Icon></button>
  </div>
)

const SpeedBall = () => (
  <div className="absolute bottom-[82px] right-[6px] z-20 flex h-[60px] items-center text-white">
    <div className="-mr-[30px] flex h-[42px] w-[90px] flex-col justify-center rounded-l-full bg-[#343943] pl-[10px] text-xs shadow-md">
      <div className="flex h-[21px] items-center border-b border-[#2a2e36]">
        <Icon w={9} h={8} className="text-[#4cb8ef]"><path d="M4.500 8V1.500M1 4.500l3.500-3.500L8 4.500" strokeWidth="2" /></Icon>
        <span className="flex-1 pr-[34px] text-right text-[13px]">1<small className="text-[10px] text-[#9da1aa]">K/s</small></span>
      </div>
      <div className="flex h-[21px] items-center">
        <Icon w={9} h={8} className="text-[#2fb344]"><path d="M4.500 0v6.500M1 3.500L4.500 7 8 3.500" strokeWidth="2" /></Icon>
        <span className="flex-1 pr-[34px] text-right text-[13px]">0.2<small className="text-[10px] text-[#9da1aa]">K/s</small></span>
      </div>
    </div>
    <div className="relative flex size-[60px] items-center justify-center rounded-full border border-[#3d414d] bg-[#555969] shadow-md">
      <svg width="60" height="60" viewBox="0 0 60 60" fill="none" strokeWidth="2" className="absolute -left-px -top-px" aria-hidden="true">
        <path d="M30 4.500A25.500 25.500 0 0 1 52 17" stroke="#44d3d0" />
        <path d="M52 17A25.500 25.500 0 0 1 48 48" stroke="#6bd9a0" />
        <path d="M48 48A25.500 25.500 0 0 1 17 52" stroke="#c5dc52" />
        <path d="M17 52A25.500 25.500 0 0 1 4.500 30" stroke="#f0a548" />
      </svg>
      <span className="font-['Open_Sans',sans-serif] text-[23px] font-light leading-6">75</span>
      <span className="mt-[9px] text-[10px] leading-3">%</span>
    </div>
  </div>
)

const Thermometer = () => (
  <svg width="12" height="56" viewBox="0 0 12 56" className="absolute bottom-[331px] right-0 z-20" aria-hidden="true">
    <rect x="3" y="0" width="6" height="50" rx="3" fill="#5f6c78" />
    <circle cx="6" cy="49" r="6" fill="#55626d" />
    <rect x="5" y="13" width="2" height="34" fill="#d8502a" />
    <circle cx="6" cy="49" r="4.500" fill="#e0730f" />
  </svg>
)

const Watermark = () => (
  <div className="pointer-events-none absolute bottom-[8px] right-[6px] z-30 flex items-center opacity-75">
    <svg width="44" height="42" viewBox="0 0 44 42" aria-hidden="true">
      <path d="M44 1C26-2 3 7 0 23c0 5 3 8 9 9C2 18 20 6 44 1z" fill="#3aa0e6" />
      <path d="M9 31c-3-10 7-20 20-20 9 0 10 12 2 16-5 3-12 1-12-3 0-3 4-5 7-3-3 0-4 3-1 3 5 1 7-7 1-9-7-1-16 7-17 16z" fill="#3b7fd0" />
      <path d="M40 14c3 8 0 18-12 22-9 4-18 3-25 4 9-1 12-4 16-6 12-3 19-10 21-20z" fill="#55b86a" />
      <path d="M2 41c8-1 12-3 16-7 4 1 8 0 12-2-6 6-15 9-28 9z" fill="#d9d94f" />
    </svg>
    <div className="flex flex-col">
      <span className="text-[21px] font-bold leading-6 text-[#3b86cf]">极光下载站</span>
      <span className="font-['Liberation_Sans',sans-serif] text-[18px] leading-5 text-[#2fae50]">www.xz7.com</span>
    </div>
  </div>
)

export default function App() {
  return (
    <div className="relative flex h-screen flex-col overflow-hidden bg-[#f5f7f9] font-['Noto_Sans','Noto_Sans_CJK_SC',sans-serif]">
      <TitleBar />
      <div className="z-10 shrink-0 bg-white shadow-[0_1px_3px_rgba(0,0,0,0.15)]">
        <MenuRow />
        <Ribbon />
      </div>
      <main className="flex min-h-0 flex-1">
        <div className="flex min-w-0 flex-1 flex-col pt-3">
          <FormulaBar />
          <div className="mt-2 flex min-h-0 flex-1">
            <Sheet />
            <VScroll />
          </div>
          <SheetTabs />
        </div>
        <Pane />
        <SideTools />
      </main>
      <StatusBar />
      <RedArrows />
      <Thermometer />
      <ImeBar />
      <SpeedBall />
      <Watermark />
    </div>
  )
}
